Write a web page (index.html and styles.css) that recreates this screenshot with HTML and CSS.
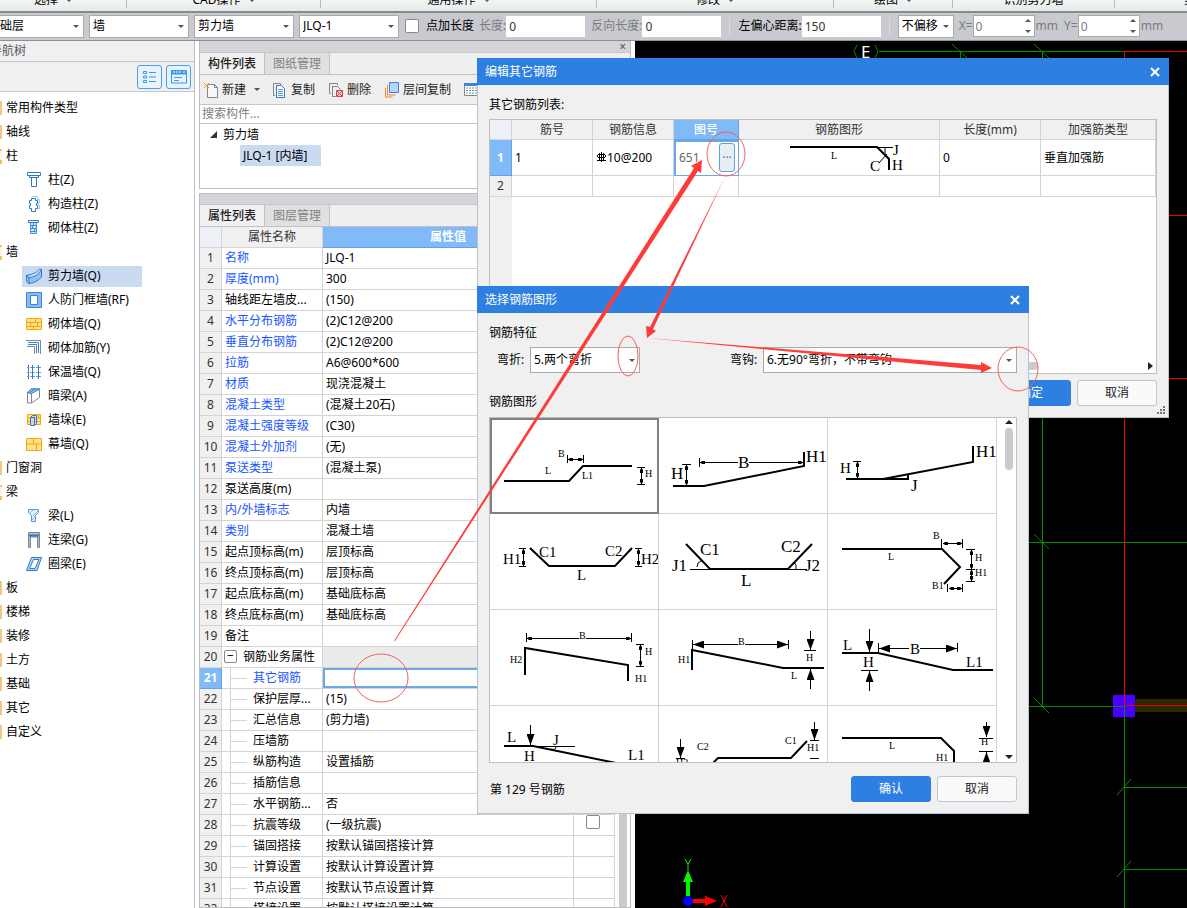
FILE: index.html
```html
<!DOCTYPE html>
<html lang="zh-CN">
<head>
<meta charset="utf-8">
<title>编辑其它钢筋</title>
<link rel="stylesheet" href="styles.css">
</head>
<body>
<svg class="defs" aria-hidden="true">
  <defs>
    <marker id="dot" viewBox="0 0 6 4" refX="6" refY="2" markerWidth="6" markerHeight="4" markerUnits="userSpaceOnUse" orient="auto-start-reverse"><path d="M6 2 4 .5H1v3h3z"/></marker>
    <marker id="head" viewBox="0 0 12 8" refX="12" refY="4" markerWidth="12" markerHeight="8" markerUnits="userSpaceOnUse" orient="auto-start-reverse"><path d="M12 4 1 0v8z"/></marker>
  </defs>
</svg>

<header class="ribbon">
  <span class="group first">选择<i class="tri"></i></span>
  <span class="group cad">CAD操作<i class="tri"></i></span>
  <span class="group common">通用操作<i class="tri"></i></span>
  <span class="group modify">修改<i class="tri"></i></span>
  <span class="group draw">绘图<i class="tri"></i></span>
  <span class="group detect">识别剪力墙</span>
  <span class="group last">剪</span>
</header>

<div class="optbar">
  <span class="combo floor"><select aria-label="楼层"><option>基础层</option></select></span>
  <span class="combo"><select aria-label="构件大类"><option>墙</option></select></span>
  <span class="combo"><select aria-label="构件类型"><option>剪力墙</option></select></span>
  <span class="combo"><select aria-label="构件"><option>JLQ-1</option></select></span>
  <label class="check"><input type="checkbox">点加长度</label>
  <label class="field dim">长度:<input type="text" value="0"></label>
  <label class="field dim">反向长度:<input type="text" value="0"></label>
  <span class="sep"></span>
  <label class="field">左偏心距离:<input type="text" value="150"></label>
  <span class="sep"></span>
  <span class="combo offset"><select aria-label="偏移"><option>不偏移</option></select></span>
  <label class="field dim">X=<span class="spin"><input type="number" value="0"></span>mm</label>
  <label class="field dim">Y=<span class="spin"><input type="number" value="0"></span>mm</label>
</div>

<main class="work">
  <nav class="nav">
    <h2 class="navhead">导航树</h2>
    <div class="navtools">
      <button type="button" aria-label="列表"><svg width="14" height="14" fill="none" stroke="#3f97ea"><path d="M.5 1.500h3v2h-3zM.5 6h3v2h-3zM.5 10.500h3v2h-3zM6 2.500h7M6 7h7M6 11.500h7"/></svg></button>
      <button type="button" aria-label="窗口"><svg width="16" height="14" fill="none" stroke="#3f97ea"><path d="M.5.500h15v12.500H.5z"/><path d="M0 2.500h16" stroke-width="4"/><path d="M2 2h2m1 0h2m1 0h2m2 0h2" stroke="#fff"/><path d="M3 7.500h8M3 10.500h5"/></svg></button>
    </div>
    <ul class="tree">
      <li>常用构件类型</li>
      <li>轴线</li>
      <li class="open">柱</li>
      <li class="leaf"><svg width="16" height="16"><path d="M1.500.5h13v3h-2v2h-9v-2h-2zM3 3.500h10M5.500 5.500v9h5v-9" fill="#fff" stroke="#2f78cb"/></svg><a href="#z1">柱(Z)</a></li>
      <li class="leaf"><svg width="16" height="16"><path d="M5.500.5h6v3h2v3h-1v3h1v3h-2" fill="none" stroke="#9ac4f0"/><path d="M5.500 2.500h4v2h2v3h-1v2h1v3h-2v3h-4v-3h-2v-3h1v-2h-1v-3h2z" fill="#fff" stroke="#2f78cb"/></svg><a href="#z2">构造柱(Z)</a></li>
      <li class="leaf"><svg width="16" height="16"><path d="M2.500.5h10v2h-10z" fill="#fff" stroke="#2f78cb"/><path d="M4.500 3v10.500h6V3M4 5.500h7M4 8.500h7M4 11.500h7M7.500 3v2.500M6.500 5.500v3M8.500 8.500v3" fill="#cfe3fa" stroke="#4a8edb"/></svg><a href="#z3">砌体柱(Z)</a></li>
      <li class="open">墙</li>
      <li class="leaf on"><svg width="16" height="16"><path d="M.5 7.500Q11 7 15.500 1v8Q11 14.500 3 15.500l-2.500-2z" fill="#8fc3f4" stroke="#2f78cb"/><path d="M.5 7.500Q10 6 13.500 1l2 .5Q11 9 3 9.500z" fill="#d6e9fc" stroke="#2f78cb"/><path d="M3 9.500v6" stroke="#2f78cb"/></svg><a href="#q1">剪力墙(Q)</a></li>
      <li class="leaf"><svg width="16" height="16"><path d="M.5.5h15v15H.5z" fill="#8db9f0" stroke="#3f84dc"/><path d="M4.500 3.500h7v9h-7z" fill="#fff" stroke="#3f84dc"/></svg><a href="#q2">人防门框墙(RF)</a></li>
      <li class="leaf"><svg width="16" height="16"><path d="M.5 2.500h15v11H.5zM0 6.500h16M0 10.500h16M9.500 2.500v4M4.500 6.500v4M11.500 6.500v4M7.500 10.500v3" fill="#ffdf92" stroke="#f5a800"/></svg><a href="#q3">砌体墙(Q)</a></li>
      <li class="leaf"><svg width="16" height="16" fill="none"><path d="M0 .5h14.500V14M1 6.500h7.500V14" stroke="#7d8790"/><path d="M2 2.500h10.500V13M2 4.500h8.500V13" stroke="#3f84dc"/></svg><a href="#q4">砌体加筋(Y)</a></li>
      <li class="leaf"><svg width="16" height="16" fill="none" stroke="#2f78cb"><path d="M2.500 1v14M6.500 1v14M12.500 1v14"/><path d="M1 3.500h14M1 8.500h14M1 12.500h14" stroke-dasharray="2 1" stroke="#6a9edb"/></svg><a href="#q5">保温墙(Q)</a></li>
      <li class="leaf"><svg width="16" height="16"><path d="M1.500 4.500 5 1h8.500v8.500L5.500 15V5z" fill="#fff" stroke="#7d8790"/><path d="M1.500 4.500V15h4" fill="none" stroke="#7d8790"/><path d="M1.500 4.500 5 1h8.500l-8 4.500zM4 4.500 9 1" fill="#a9cbf5" stroke="#2f78cb"/></svg><a href="#q6">暗梁(A)</a></li>
      <li class="leaf"><svg width="16" height="16"><path d="M1.500 2.500h13v10h-13zM1 6h14M1 9.500h14M12.500 3v3" fill="#ffdf92" stroke="#f5a800"/><path d="M4.500 5.500h4v8h-4zM8.500 13.500l2-2v-8h-4l-2 2" fill="#b9d7fa" stroke="#2f78cb"/></svg><a href="#q7">墙垛(E)</a></li>
      <li class="leaf"><svg width="16" height="16"><path d="M.5 2.500h15v12H.5zM0 8h16M7.500 2.500V8M10.500 8v6.500" fill="#ffdf92" stroke="#f5a800"/></svg><a href="#q8">幕墙(Q)</a></li>
      <li>门窗洞</li>
      <li class="open">梁</li>
      <li class="leaf"><svg width="16" height="16"><path d="M2.500 1.500h10v3l-3 3v6h-4v-6l-3-3z" fill="#e2eefc" stroke="#5a97de"/><path d="m4 5 3-3m0 6 5-5m-6 9 3-3" stroke="#8db5e6"/></svg><a href="#l1">梁(L)</a></li>
      <li class="leaf"><svg width="16" height="16"><path d="M2.500.5h11v15h-2V5h-7v10.500h-2z" fill="#b9c0c6" stroke="#7a858e"/><path d="M3 3.500h10" stroke="#2f78cb" stroke-width="2"/></svg><a href="#l2">连梁(G)</a></li>
      <li class="leaf"><svg width="16" height="16"><path d="M5.500 1.500h10L11 14.500H.5z" fill="#b9d7fa" stroke="#2f78cb"/><path d="M7.500 3.500h5.500L9 12.500H3.500z" fill="#fff" stroke="#2f78cb"/></svg><a href="#l3">圈梁(E)</a></li>
      <li>板</li><li>楼梯</li><li>装修</li><li>土方</li><li>基础</li><li>其它</li><li>自定义</li>
    </ul>
  </nav>

  <div class="side">
    <section class="panel">
      <div class="grab"><button type="button" aria-label="关闭">×</button></div>
      <div class="tabs"><button type="button" class="cur">构件列表</button><button type="button">图纸管理</button></div>
      <div class="actions">
        <button type="button" class="new"><svg width="16" height="16"><path d="M4.500 2.500h7l3 3v10h-10z" fill="#f7f7f7" stroke="#7d8790"/><path d="M11.500 2.500v3h3" fill="none" stroke="#7d8790"/><path d="m1 1 5 5m0-5L1 6" stroke="#f39a1d"/></svg>新建<i class="tri"></i></button>
        <button type="button"><svg width="16" height="16"><path d="M3 13.500H1.500v-12h7V3" fill="none" stroke="#7d8790"/><path d="M4.500 3.500h5l3 3v9h-8z" fill="#fff" stroke="#2f78cb"/><path d="M6 7.500h5M6 9.500h5M6 11.500h5M6 13.500h5" stroke="#5a97de"/></svg>复制</button>
        <button type="button"><svg width="16" height="16"><path d="M3 11.500H1.500v-10h8V3" fill="none" stroke="#7d8790"/><path d="M4.500 4.500h5l3 3M4.500 4v10.500H8" fill="none" stroke="#7d8790"/><path d="M8.500 8.500h6v6h-6z" fill="#f3c9c9" stroke="#cc4646"/><path d="m9 9 5 5m0-5-5 5" stroke="#cc4646"/></svg>删除</button>
        <button type="button"><svg width="16" height="16"><path d="M1.500 6v9h7" fill="none" stroke="#f08a2c"/><path d="M3.500 3v10h8" fill="none" stroke="#f08a2c"/><path d="M5.500.5h9v10h-9z" fill="#b5d6fa" stroke="#3f84dc"/></svg>层间复制</button>
        <button type="button" aria-label="更多"><svg width="16" height="16"><path d="M.5 1.500h15v12H.5z" fill="#fff" stroke="#7d8790"/><path d="M0 2.500h16" stroke="#3f84dc" stroke-width="3"/><path d="M2 6h12M2 8.500h12M2 11h12" stroke="#7d8790" stroke-dasharray="2 1"/></svg></button>
      </div>
      <input class="search" type="text" placeholder="搜索构件..." aria-label="搜索构件">
      <div class="comps">
        <div class="comp"><svg width="7" height="7"><path d="M7 0v7H0z" fill="#333"/></svg>剪力墙</div>
        <div class="comp sub"><span>JLQ-1 [内墙]</span></div>
      </div>
    </section>
    <section class="panel props">
      <div class="grab"></div>
      <div class="tabs"><button type="button" class="cur">属性列表</button><button type="button">图层管理</button></div>
      <div class="scroller">
      <table class="attr">
        <colgroup><col class="c1"><col class="c2"><col><col class="c4"></colgroup>
        <thead><tr><th class="corner"></th><th>属性名称</th><th class="hot">属性值</th><th></th></tr></thead>
        <tbody>
        <tr><th>1</th><td class="lk">名称</td><td>JLQ-1</td><td></td></tr>
        <tr><th>2</th><td class="lk">厚度(mm)</td><td>300</td><td></td></tr>
        <tr><th>3</th><td>轴线距左墙皮...</td><td>(150)</td><td></td></tr>
        <tr><th>4</th><td class="lk">水平分布钢筋</td><td>(2)C12@200</td><td></td></tr>
        <tr><th>5</th><td class="lk">垂直分布钢筋</td><td>(2)C12@200</td><td></td></tr>
        <tr><th>6</th><td class="lk">拉筋</td><td>A6@600*600</td><td></td></tr>
        <tr><th>7</th><td class="lk">材质</td><td>现浇混凝土</td><td></td></tr>
        <tr><th>8</th><td class="lk">混凝土类型</td><td>(混凝土20石)</td><td></td></tr>
        <tr><th>9</th><td class="lk">混凝土强度等级</td><td>(C30)</td><td></td></tr>
        <tr><th>10</th><td class="lk">混凝土外加剂</td><td>(无)</td><td></td></tr>
        <tr><th>11</th><td class="lk">泵送类型</td><td>(混凝土泵)</td><td></td></tr>
        <tr><th>12</th><td>泵送高度(m)</td><td></td><td></td></tr>
        <tr><th>13</th><td class="lk">内/外墙标志</td><td>内墙</td><td></td></tr>
        <tr><th>14</th><td class="lk">类别</td><td>混凝土墙</td><td></td></tr>
        <tr><th>15</th><td>起点顶标高(m)</td><td>层顶标高</td><td></td></tr>
        <tr><th>16</th><td>终点顶标高(m)</td><td>层顶标高</td><td></td></tr>
        <tr><th>17</th><td>起点底标高(m)</td><td>基础底标高</td><td></td></tr>
        <tr><th>18</th><td>终点底标高(m)</td><td>基础底标高</td><td></td></tr>
        <tr><th>19</th><td>备注</td><td></td><td></td></tr>
        <tr class="sec"><th>20</th><td><button type="button" class="fold" aria-label="折叠">−</button>钢筋业务属性</td><td></td><td></td></tr>
        <tr class="kid cur"><th>21</th><td class="lk">其它钢筋</td><td></td><td></td></tr>
        <tr class="kid"><th>22</th><td>保护层厚...</td><td>(15)</td><td></td></tr>
        <tr class="kid"><th>23</th><td>汇总信息</td><td>(剪力墙)</td><td></td></tr>
        <tr class="kid"><th>24</th><td>压墙筋</td><td></td><td></td></tr>
        <tr class="kid"><th>25</th><td>纵筋构造</td><td>设置插筋</td><td></td></tr>
        <tr class="kid"><th>26</th><td>插筋信息</td><td></td><td></td></tr>
        <tr class="kid"><th>27</th><td>水平钢筋...</td><td>否</td><td></td></tr>
        <tr class="kid"><th>28</th><td>抗震等级</td><td>(一级抗震)</td><td class="tick"><input type="checkbox" aria-label="抗震等级附加"></td></tr>
        <tr class="kid"><th>29</th><td>锚固搭接</td><td>按默认锚固搭接计算</td><td></td></tr>
        <tr class="kid"><th>30</th><td>计算设置</td><td>按默认计算设置计算</td><td></td></tr>
        <tr class="kid"><th>31</th><td>节点设置</td><td>按默认节点设置计算</td><td></td></tr>
        <tr class="kid"><th>32</th><td>搭接设置</td><td>按默认搭接设置计算</td><td></td></tr>
        </tbody>
      </table>
      <div class="vbar"></div>
      </div>
    </section>
  </div>

  <div class="canvas">
    <svg width="100%" height="100%" fill="none" stroke="#008c00">
      <path d="M222 4l-3 6 3 7M240 4l3 6-3 7M244 10.500h245M325.500 10v500M407.500 10v655M317 3l15 14M399 3l15 14"/>
      <path d="M380 501.500h600M399 493l15 15M380 665.500h109M399 657l15 15M489.500 676v300M489 746.500h500M489 828.500h500M482 754l14-16M482 836l14-16"/>
      <path d="M500 658h500v13H500z" fill="#2e2800" stroke="none"/>
      <path d="M478 654h22v22h-22z" fill="#4800ff" stroke="none"/>
      <path d="M489.500 664.500V11M489 10.500h500M489 664.500h500M489 174.500h500M489 337.500h500" stroke="#ee0000"/>
      <path d="M478 665.500h11M489.500 665v11"/>
      <path d="M53 855v-18" stroke="#00f800" stroke-width="4"/><path d="M53 829l5 12H48z" fill="#00f800" stroke="none"/>
      <path d="M57 860h16" stroke="#f00" stroke-width="4"/><path d="M82 860l-12-5v10z" fill="#f00" stroke="none"/>
      <circle cx="53" cy="860" r="5" fill="#00f" stroke="none"/>
      <text x="226" y="17" class="axis" fill="#fff">E</text>
      <path d="M50 818l3 5 3-5M53 823v6" stroke="#00f800"/>
      <path d="M86 854l6 12M92 854l-6 12" stroke="#f00"/>
    </svg>
  </div>
</main>

<section class="win edit" role="dialog" aria-labelledby="t1">
  <div class="title"><h1 id="t1">编辑其它钢筋</h1><button type="button" aria-label="关闭"><svg width="10" height="10"><path d="m1 1 8 8m0-8-8 8" stroke="#fff" stroke-width="2"/></svg></button></div>
  <div class="winbody">
    <p class="cap">其它钢筋列表:</p>
    <div class="sheet">
      <table class="bars">
        <colgroup><col class="b1"><col class="b2"><col class="b2"><col class="b3"><col class="b4"><col class="b5"><col></colgroup>
        <thead><tr><th class="corner"></th><th>筋号</th><th>钢筋信息</th><th class="hot">图号</th><th>钢筋图形</th><th>长度(mm)</th><th>加强筋类型</th></tr></thead>
        <tbody>
        <tr class="tall"><th class="hot">1</th><td>1</td><td><svg class="rebar" width="9" height="10" fill="none" stroke="#000"><path d="M4.500 0v10M2.500 1v7M6.500 1v7M1 2.500h7M1 5.500h7M0 8.500h9M.5 3v2M8.500 3v2"/></svg>10@200</td><td class="pick"><span>651<button type="button" aria-label="选择图号">···</button></span></td>
        <td class="pic"><svg width="200" height="35" viewBox="0 0 200 35" class="shape"><path class="bar" d="M51 7h87l12 12v11"/><path d="M138 7.500h16M140 23l8-9M146 8v6"/><text x="92" y="19" class="s">L</text><text x="154" y="15" class="m">J</text><text x="131" y="31" class="m">C</text><text x="153" y="30" class="m">H</text></svg></td>
        <td>0</td><td>垂直加强筋</td></tr>
        <tr><th>2</th><td></td><td></td><td></td><td></td><td></td><td></td></tr>
        </tbody>
      </table>
      <div class="rest"></div>
      <div class="hbar"><i></i><svg width="6" height="8"><path d="M0 0l5 4-5 4z" fill="#222"/></svg></div>
    </div>
    <div class="foot"><button type="button" class="btn main">确定</button><button type="button" class="btn">取消</button></div>
  </div>
  <svg class="grip" width="9" height="9" fill="#6c7882"><path d="M6 0h2v2H6zM3 3h2v2H3zM6 3h2v2H6zM0 6h2v2H0zM3 6h2v2H3zM6 6h2v2H6z"/></svg>
</section>

<section class="win choose" role="dialog" aria-labelledby="t2">
  <div class="title"><h1 id="t2">选择钢筋图形</h1><button type="button" aria-label="关闭"><svg width="10" height="10"><path d="m1 1 8 8m0-8-8 8" stroke="#fff" stroke-width="2"/></svg></button></div>
  <div class="winbody">
    <p class="cap">钢筋特征</p>
    <div class="filters">
      <label for="bend">弯折:</label><span class="combo bend"><select id="bend"><option>5.两个弯折</option></select></span>
      <label for="hook" class="hooklabel">弯钩:</label><span class="combo hook"><select id="hook"><option>6.无90°弯折，不带弯钩</option></select></span>
    </div>
    <p class="cap second">钢筋图形</p>
    <div class="gallery">
      <div class="cells">
        <svg class="shape picked" viewBox="0 0 168 95"><path class="bar" d="M14 63h65l14-15h49"/><path class="dim" d="M78 41.500h15"/><path d="M77.500 37v8M93.500 37v8M147 49.500h8M147 66.500h8"/><path class="dim" d="M151.500 50v16"/><text x="68" y="39" class="s">B</text><text x="55" y="56" class="s">L</text><text x="92" y="61" class="s">L1</text><text x="155" y="59" class="s">H</text></svg>
        <svg class="shape" viewBox="0 0 168 95"><path class="bar" d="M14 68h31l100-20V34"/><path class="dim" d="M27.500 47v20"/><path d="M23 46.500h9M23 67.500h9M40.500 40v9"/><path class="dim1" d="M79 44.500H41"/><path class="dim1" d="M90 44.500h54"/><text x="12" y="61" class="l">H</text><text x="79" y="50" class="l">B</text><text x="147" y="44" class="l">H1</text></svg>
        <svg class="shape" viewBox="0 0 168 95"><path class="bar" d="M18 61h37l90-17V28"/><path class="bar" d="M55 61h25v-5"/><path class="dim" d="M29.500 44v16"/><path d="M25 43.500h8"/><text x="12" y="55" class="m">H</text><text x="148" y="39" class="l">H1</text><text x="83" y="73" class="l">J</text></svg>

        <svg class="shape" viewBox="0 0 168 95"><path class="bar" d="M40 34l19 18h66l17-18"/><path class="dim" d="M33.500 35v17"/><path class="dim" d="M148.500 35v17"/><path d="M29 34.500h7M29 52.500h7M145 34.500h7M145 52.500h7"/><text x="13" y="50" class="m">H1</text><text x="49" y="43" class="m">C1</text><text x="115" y="42" class="m">C2</text><text x="87" y="66" class="m">L</text><text x="151" y="50" class="m">H2</text></svg>
        <svg class="shape" viewBox="0 0 168 95"><path class="bar" d="M27 30l24 25h78l24-25"/><path d="M31 55.500h20M129 55.500h19M38 53q0-5 4-6M137 55q1-4-2-7"/><text x="13" y="57" class="l">J1</text><text x="41" y="41" class="l">C1</text><text x="82" y="72" class="l">L</text><text x="122" y="38" class="l">C2</text><text x="146" y="57" class="l">J2</text></svg>
        <svg class="shape" viewBox="0 0 168 95"><path class="bar" d="M14 35h100l18 18-16 17"/><path class="dim" d="M115 29.500h19"/><path class="dim" d="M121 74.500h13"/><path class="dim" d="M143.500 36v19"/><path class="dim" d="M143.500 56v11"/><path d="M113.500 25v9M134.500 25v9M119.500 70v8M134.500 70v8M138 35.500h9M138 55.500h9M138 67.500h9"/><text x="105" y="25" class="s">B</text><text x="60" y="46" class="s">L</text><text x="147" y="47" class="s">H</text><text x="147" y="62" class="s">H1</text><text x="104" y="75" class="s">B1</text></svg>

        <svg class="shape" viewBox="0 0 168 95"><path class="bar" d="M35 65V38l103 17v16"/><path class="dim1" d="M89 28.500H37"/><path class="dim1" d="M96 28.500h45"/><path class="dim" d="M150.500 35v21"/><path d="M36.500 23v9M141.500 23v9M146 34.500h8M146 56.500h8"/><text x="89" y="29" class="s">B</text><text x="20" y="53" class="s">H2</text><text x="155" y="45" class="s">H</text><text x="145" y="72" class="s">H1</text></svg>
        <svg class="shape" viewBox="0 0 168 95"><path class="bar" d="M33 60V40l91 18h41"/><path class="arr" d="M79 34.500H34"/><path class="arr" d="M86 34.500h43"/><path class="arr" d="M151.500 21v19"/><path class="arr" d="M151.500 79V59"/><path d="M33.500 30v9M129.500 30v9M145 40.500h12"/><text x="79" y="35" class="s">B</text><text x="19" y="53" class="s">H1</text><text x="147" y="51" class="s">H</text><text x="132" y="69" class="s">L</text></svg>
        <svg class="shape" viewBox="0 0 168 95"><path class="bar" d="M14 43h36l75 17h40"/><path class="arr" d="M41.500 19v23"/><path class="arr" d="M41.500 81V61"/><path class="arr" d="M81 38.500H51"/><path class="arr" d="M92 38.500h37"/><path d="M50.500 33v9M129.500 33v9M33 60.500h17"/><text x="15" y="40" class="m">L</text><text x="35" y="57" class="m">H</text><text x="82" y="44" class="m">B</text><text x="138" y="57" class="m">L1</text></svg>

        <svg class="shape" viewBox="0 0 168 95"><path class="bar" d="M14 40h29l83 17 20 4"/><path class="arr" d="M40.500 19v20"/><path d="M43 40.500h42M66 40q0 5-5 3"/><text x="17" y="36" class="m">L</text><text x="63" y="39" class="m">J</text><text x="34" y="55" class="m">H</text><text x="138" y="54" class="m">L1</text></svg>
        <svg class="shape" viewBox="0 0 168 95"><path class="bar" d="M50 61l9-9h73l16-17"/><path class="arr" d="M21.500 33v19"/><path class="arr" d="M155.500 16v18"/><path d="M17 52.500h9M151 34.500h9M151 52.500h9"/><text x="17" y="60" class="s">H2</text><text x="38" y="44" class="s">C2</text><text x="126" y="38" class="s">C1</text><text x="148" y="45" class="s">H1</text></svg>
        <svg class="shape" viewBox="0 0 168 95"><path class="bar" d="M14 32h99l13 13v16"/><path class="arr" d="M158.500 16v15"/><path class="arr" d="M158.500 64V46"/><path d="M151 32.500h14M151 45.500h14"/><text x="61" y="43" class="s">L</text><text x="108" y="55" class="s">H1</text><text x="153" y="39" class="s">H</text></svg>
      </div>
      <div class="gbar"><svg width="8" height="4"><path d="M0 4l4-4 4 4z" fill="#222"/></svg><i></i><svg width="8" height="4"><path d="M0 0l4 4 4-4z" fill="#222"/></svg></div>
    </div>
    <div class="foot"><span class="note">第 129 号钢筋</span><button type="button" class="btn main">确认</button><button type="button" class="btn">取消</button></div>
  </div>
</section>

<svg class="marks" aria-hidden="true">
  <g fill="#ff3b38">
    <path d="M394 641l300-473-3-2 11-6-1 13-3-2-303 470z"/>
    <path d="M725 177l-75 150-4-1 1 12 9-7-3-2z"/>
    <path d="M647 338l334 27v-3l11 6-11 5v-3z"/>
  </g>
  <g fill="none" stroke="#f26060">
    <ellipse cx="726" cy="154" rx="19" ry="22"/><ellipse cx="628" cy="356" rx="10" ry="20"/><ellipse cx="1018" cy="369" rx="20" ry="22"/><ellipse cx="381" cy="678" rx="27" ry="24"/>
  </g>
</svg>
</body>
</html>
```

FILE: styles.css
```css
* { box-sizing: border-box; }
body {
  margin: 0;
  height: 100vh;
  display: flex;
  flex-direction: column;
  position: relative;
  overflow: hidden;
  background: #fff;
  color: #000;
  font: 12px/20px "Noto Sans", "Noto Sans CJK SC", sans-serif;
}
button, input, select { font: inherit; color: inherit; margin: 0; }
button { background: none; border: 0; padding: 0; }
h1, h2, p, ul { margin: 0; padding: 0; font-size: 12px; font-weight: 400; }
a { color: inherit; text-decoration: none; }
.defs { position: absolute; width: 0; height: 0; }
.tri { display: inline-block; border: 3px solid transparent; border-top-color: #555; border-bottom: 0; margin-left: 7px; vertical-align: 2px; }

/* ribbon group captions */
.ribbon { display: flex; flex: none; height: 13px; background: linear-gradient(#f3f5f5, #e6eae9); border-bottom: 2px solid #858c8e; overflow: hidden; }
.group { flex: none; height: 8px; padding-bottom: 8px; line-height: 16px; text-align: center; border-right: 1px solid #b9bdbd; white-space: nowrap; display: flex; justify-content: center; align-items: center; }
.group .tri { margin-left: 8px; }
.group.first { width: 147px; margin-left: -20px; }
.group.cad { width: 194px; }
.group.common { width: 276px; }
.group.modify { width: 237px; }
.group.draw { width: 119px; }
.group.detect { width: 162px; }
.group.last { justify-content: flex-start; padding-left: 69px; border: 0; }

/* option bar */
.optbar { display: flex; flex: none; align-items: center; height: 28px; padding-bottom: 1px; background: #c8cad0; border-bottom: 1px solid #8d9196; white-space: nowrap; overflow: hidden; gap: 5px; }
.combo { position: relative; display: block; flex: none; width: 100px; height: 23px; background: #fff; border: 1px solid #aaa; }
.combo::after { content: ""; position: absolute; right: 4px; top: 9px; border: 3px solid transparent; border-top-color: #555; border-bottom: 0; pointer-events: none; }
.combo select { appearance: none; width: 100%; height: 100%; border: 0; background: none; padding: 0 3px; outline: 0; }
.combo.floor { margin-left: -16px; }
.combo.offset { width: 56px; }
.check { display: flex; align-items: center; gap: 7px; margin: 0 0 0 1px; }
input[type="checkbox"] { appearance: none; width: 14px; height: 14px; background: #fff; border: 1px solid #888; border-radius: 2px; }
.field { display: flex; align-items: center; }
.field input { width: 79px; height: 21px; border: 1px solid #fff; background: #fff; padding: 0 2px; color: #333; outline: 0; }
.field.dim { color: #7a7c80; }
.field + .field { margin-left: 1px; }
.sep { width: 1px; height: 18px; background: #d9dade; margin: 0 3px; }
.spin { position: relative; margin-right: 1px; }
.spin input { appearance: textfield; width: 62px; height: 22px; border: 1px solid #aaa; color: #7a7c80; display: block; }
.spin::before, .spin::after { content: ""; position: absolute; right: 4px; border: 3px solid transparent; }
.spin::before { top: 4px; border-bottom-color: #555; border-top: 0; }
.spin::after { bottom: 4px; border-top-color: #555; border-bottom: 0; }
input::-webkit-inner-spin-button { appearance: none; }

/* workspace */
.work { flex: 1; min-height: 0; display: flex; }
.nav { flex: none; width: 195px; border-right: 1px solid #bdbdc4; overflow: hidden; }
.navhead { height: 21px; line-height: 20px; margin-left: -10px; background: #f0f0f0; border-bottom: 1px solid #c6c6cc; color: #55575c; }
.navtools { display: flex; justify-content: flex-end; align-items: center; gap: 4px; height: 30px; padding-right: 3px; background: #f0f0f0; border-bottom: 1px solid #c6c6cc; }
.navtools button { width: 25px; height: 24px; border: 1px solid #4a9ff0; border-radius: 3px; background: #e8f3fe; display: flex; align-items: center; justify-content: center; }
.tree { list-style: none; padding-top: 4px; }
.tree li { height: 24px; line-height: 24px; padding-left: 4px; border-left: 2px solid #fff; border-image: linear-gradient(transparent 25%, #f2c880 25%, #f2c880 75%, transparent 75%) 1; border-width: 0 0 0 2px; }
.tree li.open { border-image: linear-gradient(transparent 25%, #efc06a 25%, #efc06a 30%, #fff4dc 30%, #fff4dc 65%, #efc06a 65%, #efc06a 80%, transparent 80%) 1; }
.tree li.leaf { border: 0; display: flex; align-items: center; gap: 6px; margin: 0 52px 0 22px; }
.tree li.on { background: linear-gradient(transparent 2px, #c9daf1 2px, #c9daf1 23px, transparent 23px); }

.side { flex: none; width: 440px; padding: 0 4px 0 4px; display: flex; flex-direction: column; gap: 4px; }
.panel { border: 1px solid #bdbdc4; border-top: 0; background: #fff; flex: none; }
.grab { height: 12px; background: #d4d4d9; border-bottom: 1px solid #c6c6cc; display: flex; justify-content: flex-end; align-items: center; padding-right: 4px; }
.grab button { line-height: 10px; color: #555; }
.tabs { display: flex; height: 22px; background: #efefef; border-bottom: 1px solid #c0c0c6; }
.tabs button { width: 65px; line-height: 20px; border-right: 1px solid #c0c0c6; background: #e0e0e0; color: #808080; }
.tabs button.cur { background: #f0f0f0; color: #222; font-weight: 500; }
.actions { display: flex; height: 30px; background: #efefef; border-bottom: 1px solid #c6c6cc; padding-left: 3px; gap: 13px; overflow: hidden; }
.actions button { display: flex; align-items: center; gap: 3px; flex: none; color: #222; }
.actions .tri { margin-left: 5px; }
.actions .new { margin-right: -1px; }
.search { display: block; width: 100%; height: 19px; border: 0; border-bottom: 1px solid #c6c6cc; padding: 0 2px; outline: 0; }
.search::placeholder { color: #808080; opacity: 1; }
.comps { height: 64px; }
.comp { display: flex; align-items: center; height: 21px; padding-left: 10px; gap: 6px; }
.comp.sub { padding-left: 40px; }
.comp.sub span { background: #c9daf1; padding: 0 3px; line-height: 21px; width: 81px; white-space: nowrap; }
.props { flex: 1; min-height: 0; display: flex; flex-direction: column; border-top: 1px solid #bdbdc4; }
.props .grab { height: 11px; flex: none; }
.props .tabs { flex: none; }
.scroller { flex: 1; min-height: 0; display: flex; overflow: hidden; }
.attr { flex: 1; border-collapse: separate; border-spacing: 0; table-layout: fixed; align-self: flex-start; }
.vbar { width: 8px; margin: 0 3px 0 4px; background: #cbcbcb; flex: none; }
.c1 { width: 22px; } .c2 { width: 101px; } .c4 { width: 41px; }
.attr tr { height: 21px; }
.attr th, .attr td { padding: 0 3px; height: 21px; line-height: 20px; border: solid #d4d4d4; border-width: 0 1px 1px 0; font-weight: 400; white-space: nowrap; overflow: hidden; text-align: left; }
.attr thead th, .attr th { text-align: center; background: #f0f0f0; color: #333; padding: 0; }
.attr .corner, .bars .corner { background: #edf1f7; }
.attr .hot, .attr .cur th, .bars .hot { background: #80baf8; color: #fff; font-weight: 700; border-color: #62a3e8; }
.attr .lk { color: #1a56ff; }
.sec td + td { background: #ebebeb; }
.attr .sec td:nth-child(2) { padding-left: 1px; }
.fold { width: 13px; height: 13px; line-height: 10px; border: 1px solid #888; border-radius: 2px; background: #fff; margin: 0 6px 0 1px; vertical-align: 1px; }
.attr .kid td:nth-child(2) { padding-left: 31px; background: linear-gradient(#d4d4d4, #d4d4d4) 8px 10px / 17px 1px no-repeat, linear-gradient(#d4d4d4, #d4d4d4) 8px 0 / 1px 100% no-repeat; }
.cur td:nth-child(3) { box-shadow: inset 0 0 0 2px #6aa8e8; }
.attr .tick { text-align: center; padding: 0; }
.tick input { vertical-align: 0; margin-right: 3px; }

.canvas { flex: 1; min-width: 0; background: #000; overflow: hidden; }
.canvas svg { display: block; }
.axis { font: 17px "Noto Sans", sans-serif; stroke: none; }

/* floating windows */
.win { position: absolute; display: flex; flex-direction: column; background: #f0f0f0; border: 1px solid #b9c3d0; border-top: 0; }
.edit { left: 477px; top: 58px; width: 692px; height: 360px; }
.choose { left: 477px; top: 286px; width: 552px; height: 528px; }
.title { display: flex; flex: none; align-items: center; justify-content: space-between; height: 27px; margin: 0 -1px; padding: 0 9px 0 8px; background: #2d80e1; color: #fff; }
.title svg { display: block; }
.winbody { flex: 1; min-height: 0; display: flex; flex-direction: column; padding: 10px 11px 11px; }
.cap { flex: none; line-height: 20px; }
.edit .winbody .cap { margin-bottom: 4px; }
.sheet { flex: 1; min-height: 0; display: flex; flex-direction: column; background: #fff; border: 1px solid #bfbfbf; }
.bars { width: 100%; border-collapse: separate; border-spacing: 0; table-layout: fixed; flex: none; }
.b1 { width: 22px; } .b2 { width: 81px; } .b3 { width: 65px; } .b4 { width: 201px; } .b5 { width: 101px; }
.bars th, .bars td { padding: 0 3px; height: 21px; line-height: 18px; border: solid #d4d4d4; border-width: 0 1px 1px 0; text-align: left; font-weight: 400; }
.bars th { background: #f0f0f0; text-align: center; color: #333; padding: 0; }
.bars thead th { height: 20px; }
.bars thead .hot { font-weight: 500; color: #fff; }
.bars .tall th, .bars .tall td { height: 36px; }
.bars .tall .hot { color: #fff; font-weight: 700; }
.bars .tall .pic { padding: 0; }
.pic svg { display: block; }
.rebar { margin: 0 1px; shape-rendering: crispEdges; }
.bars .tall .pick { padding: 0; box-shadow: inset 1px 1px 0 1px #6aa8e8; color: #666; border-color: #6aa8e8; }
.pick span { display: flex; align-items: center; justify-content: space-between; padding: 0 3px 0 5px; }
.pick button { width: 16px; height: 29px; line-height: 20px; border: 1px solid #5ca0dc; border-radius: 3px; background: #e9eef5; color: #2d80e1; }
.rest { flex: 1; background: linear-gradient(90deg, #f0f0f0 22px, #fff 22px); }
.hbar { display: flex; align-items: center; justify-content: flex-end; gap: 110px; height: 14px; padding-right: 2px; background: linear-gradient(90deg, #f0f0f0 22px, #fff 22px); }
.hbar i { width: 400px; height: 8px; border-radius: 4px; background: #cbcbcb; }
.foot { display: flex; flex: none; align-items: center; justify-content: flex-end; gap: 6px; }
.btn { width: 80px; height: 26px; border: 1px solid #bcc7d8; border-radius: 3px; background: #fafafa; color: #222; }
.btn.main { background: #2d80e1; border-color: #2d80e1; color: #fff; }
.edit .foot { margin-top: 6px; }
.grip { position: absolute; right: 2px; bottom: 2px; }

.filters { display: flex; flex: none; align-items: center; margin: 4px 0 19px 8px; }
.filters .combo { height: 26px; border-color: #aaa; }
.filters .combo::after { top: 11px; }
.filters label { width: 33px; }
.filters .bend { width: 110px; }
.filters .hook { flex: 1; width: auto; }
.filters .hooklabel { margin-left: 90px; }
.gallery { flex: 1; min-height: 0; display: flex; margin: 5px 0 13px; border: 1px solid #bfbfbf; background: #fff; overflow: hidden; }
.cells { flex: 1; display: grid; grid-template-columns: repeat(3, 1fr); grid-auto-rows: 96px; overflow: hidden; }
.shape { display: block; fill: none; stroke: #000; stroke-width: 1; }
.cells .shape { width: 100%; height: 96px; border: solid #d4d4d4; border-width: 0 1px 1px 0; }
.cells .picked { outline: 2px solid #808080; outline-offset: -2px; border-color: #808080; }
.bar { stroke-width: 2; }
.dim { marker-start: url(#dot); marker-end: url(#dot); }
.dim1 { marker-end: url(#dot); }
.arr { marker-end: url(#head); }
marker path { fill: #000; stroke: none; }
.shape text { fill: #000; stroke: none; font-family: "Liberation Serif", serif; }
.s { font-size: 10px; }
.m { font-size: 15px; }
.l { font-size: 17px; }
.gbar { flex: none; width: 19px; display: flex; flex-direction: column; align-items: center; padding: 2px 0 3px 4px; gap: 4px; }
.gbar i { width: 8px; height: 42px; border-radius: 4px; background: #cbcbcb; margin-bottom: auto; }
.note { margin-right: auto; padding: 2px 0 0 1px; }

.marks { position: absolute; inset: 0; width: 100%; height: 100%; pointer-events: none; }
```
